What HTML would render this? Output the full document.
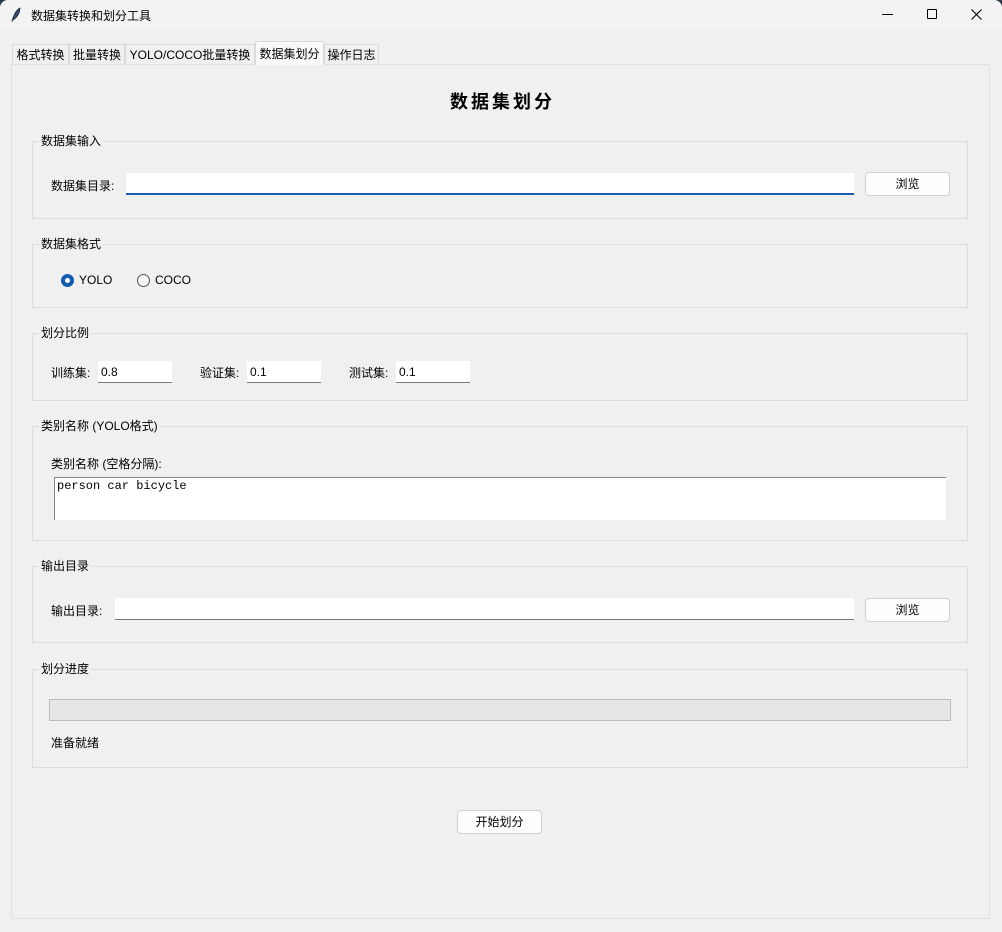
<!DOCTYPE html>
<html><head><meta charset="utf-8"><style>
*{margin:0;padding:0;box-sizing:border-box}
body{width:1002px;height:932px;background:#2b3a4a;overflow:hidden;font-family:"Liberation Sans","Noto Sans CJK SC",sans-serif;font-size:12px;color:#000}
.win{position:absolute;left:0;top:0;width:1002px;height:932px;background:#f0f0f0;border-radius:8px 8px 0 0;overflow:hidden}
.tb{position:absolute;left:0;top:0;width:1002px;height:30px;background:#f3f3f3}
.a{position:absolute;white-space:nowrap}
.lf{position:absolute;left:32px;width:936px;border:1px solid #dcdcdc}
.lft{position:absolute;left:6px;top:-9px;background:#f0f0f0;padding:0 2px;line-height:16px}
.ent{position:absolute;background:#fff;border-bottom:1px solid #7a7a7a;height:22px;line-height:22px;padding-left:3px}
.btn{position:absolute;background:#fdfdfd;border:1px solid #d0d0d0;border-radius:4px;height:24px;line-height:22px;text-align:center}
.tab{position:absolute;top:44px;height:20px;line-height:20px;border:1px solid #dadada;border-bottom:none;background:#f0f0f0;text-align:center;font-size:12px}
</style></head><body><div class="win">
<div class="tb">
<svg class="a" style="left:10px;top:7px" width="12" height="16" viewBox="0 0 12 16"><path d="M2 15 C3 9 6 3 10 1 C10 5 8 10 3 13" fill="#3a4a6a" stroke="#1a2a40" stroke-width="0.8"/></svg>
<div class="a" style="left:31px;top:7px;font-size:12px">数据集转换和划分工具</div>
<div class="a" style="left:882px;top:14px;width:11px;height:1px;background:#000"></div>
<div class="a" style="left:927px;top:9px;width:10px;height:10px;border:1px solid #000;border-radius:1px"></div>
<svg class="a" style="left:971px;top:9px" width="11" height="11"><path d="M0.5 0.5L10.5 10.5M10.5 0.5L0.5 10.5" stroke="#000" stroke-width="1.1"/></svg>
</div>
<div class="a" style="left:11px;top:64px;width:979px;height:855px;border:1px solid #e0e0e0"></div>
<div class="tab" style="left:12px;width:57px">格式转换</div>
<div class="tab" style="left:69px;width:56px">批量转换</div>
<div class="tab" style="left:125px;width:130px">YOLO/COCO批量转换</div>
<div class="tab" style="left:255px;top:41px;height:24px;width:69px;background:#f9f9f9;line-height:24px">数据集划分</div>
<div class="tab" style="left:324px;width:55px">操作日志</div>
<div class="a" style="left:0;top:88px;width:1002px;text-align:center;font-size:18px;font-weight:bold;letter-spacing:3px;padding-left:3px">数据集划分</div>

<div class="lf" style="top:141px;height:78px"><div class="lft">数据集输入</div></div>
<div class="a" style="left:51px;top:177px">数据集目录:</div>
<div class="ent" style="left:126px;top:173px;width:728px;border-bottom:2px solid #1a5fb4"></div>
<div class="btn" style="left:865px;top:172px;width:85px">浏览</div>

<div class="lf" style="top:244px;height:64px"><div class="lft">数据集格式</div></div>
<div class="a" style="left:61px;top:274px;width:13px;height:13px;border-radius:50%;background:#0f5cb0"><div style="position:absolute;left:4px;top:4px;width:5px;height:5px;border-radius:50%;background:#fff"></div></div>
<div class="a" style="left:79px;top:273px">YOLO</div>
<div class="a" style="left:137px;top:274px;width:13px;height:13px;border-radius:50%;border:1px solid #555;background:#f5f5f5"></div>
<div class="a" style="left:155px;top:273px">COCO</div>

<div class="lf" style="top:333px;height:68px"><div class="lft">划分比例</div></div>
<div class="a" style="left:51px;top:364px">训练集:</div>
<div class="ent" style="left:98px;top:361px;width:74px">0.8</div>
<div class="a" style="left:200px;top:364px">验证集:</div>
<div class="ent" style="left:247px;top:361px;width:74px">0.1</div>
<div class="a" style="left:349px;top:364px">测试集:</div>
<div class="ent" style="left:396px;top:361px;width:74px">0.1</div>

<div class="lf" style="top:426px;height:115px"><div class="lft">类别名称 (YOLO格式)</div></div>
<div class="a" style="left:51px;top:455px">类别名称 (空格分隔):</div>
<div class="a" style="left:54px;top:477px;width:892px;height:43px;background:#fff;border-top:1px solid #888;border-left:1px solid #888;font-family:'Liberation Mono',monospace;font-size:12px;padding:1px 0 0 2px">person car bicycle</div>

<div class="lf" style="top:566px;height:77px"><div class="lft">输出目录</div></div>
<div class="a" style="left:51px;top:602px">输出目录:</div>
<div class="ent" style="left:115px;top:598px;width:739px"></div>
<div class="btn" style="left:865px;top:598px;width:85px">浏览</div>

<div class="lf" style="top:669px;height:99px"><div class="lft">划分进度</div></div>
<div class="a" style="left:49px;top:699px;width:902px;height:22px;background:#e6e6e6;border:1px solid #bcbcbc"></div>
<div class="a" style="left:51px;top:734px">准备就绪</div>

<div class="btn" style="left:457px;top:810px;width:85px">开始划分</div>
</div></body></html>
